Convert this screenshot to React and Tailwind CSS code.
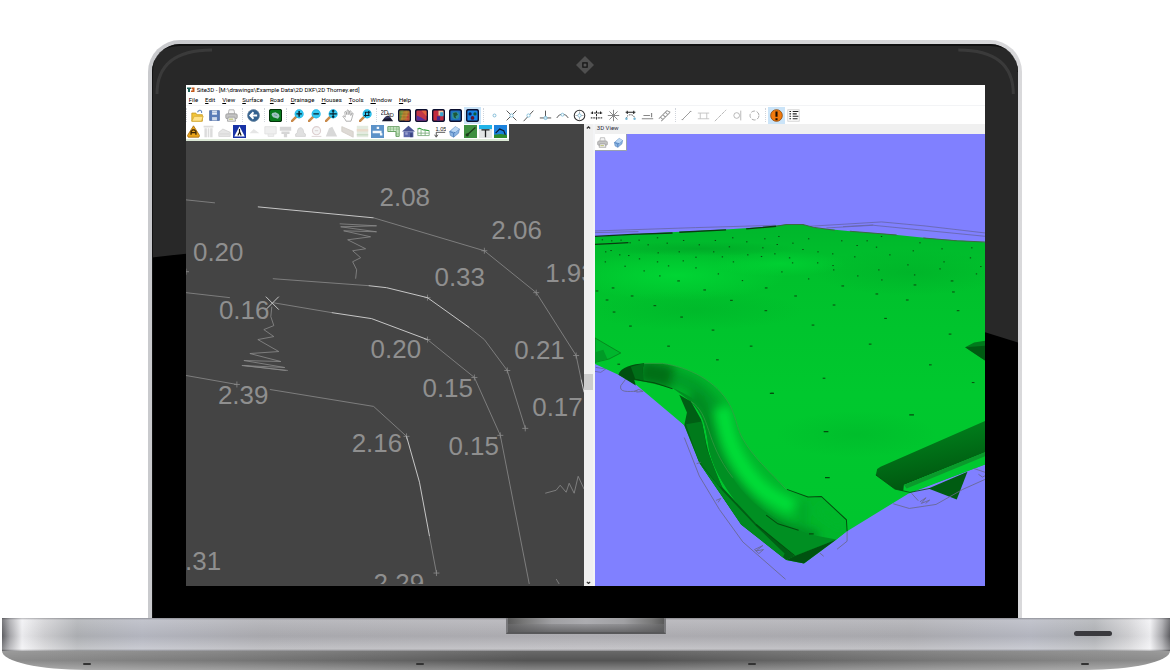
import React from "react";

const FONT = "font-[Roboto,'Noto_Sans',sans-serif]";

const MENUS = [
  "File",
  "Edit",
  "View",
  "Surface",
  "Road",
  "Drainage",
  "Houses",
  "Tools",
  "Window",
  "Help",
];

/* ---------- toolbar icons, all on a 16 x 16 grid ---------- */

const Lens = ({ children }) => (
  <>
    <path d="M1 15l5-5" stroke="#c98a4b" strokeWidth="3" strokeLinecap="round" />
    <circle cx="10" cy="6" r="5.6" fill="#19b4e6" />
    <circle cx="10" cy="6" r="4.6" fill="#35c8f0" />
    <g stroke="#06222e" strokeWidth="1.8" fill="none">
      {children}
    </g>
  </>
);

const Tile = ({ fill, children }) => (
  <>
    <rect x="0.8" y="0.8" width="14.4" height="14.4" rx="2.4" fill={fill} stroke="#0c1030" strokeWidth="1.8" />
    {children}
  </>
);

const Printer = () => (
  <>
    <path d="M4 6l1-5h6l1 5z" fill="#f4f4f4" stroke="#aaa" />
    <rect x="1" y="6" width="14" height="6" rx="1.5" fill="#c4c4c4" stroke="#999" />
    <path d="M4 10h8l1 5H3z" fill="#eee" stroke="#999" />
    <path d="M5 12.5h5" stroke="#a9b13c" />
  </>
);

const Cube = () => (
  <>
    <path d="M2 8l7-6 5 3-1 5-6 5-4-2z" fill="#8ab4e2" stroke="#5a86bd" strokeWidth="0.8" />
    <path d="M2 8l5 2 7-5M7 10v5" stroke="#4576b5" fill="none" />
    <path d="M9 2l5 3-5 4-5-2z" fill="#bcd8f4" />
  </>
);

const FILE_GROUP = [
  ["Open", <><path d="M1 5h5l1 2h7v8H1z" fill="#f3c63a" stroke="#c59a25" /><path d="M1 15l3-6h11l-2 6z" fill="#ffe38a" stroke="#d5ab39" /><path d="M8 4c1-3 4-3 5-1v2" stroke="#6c8fc0" strokeWidth="1.4" fill="none" /></>],
  ["Save", <><path d="M2 2h12v12H2z" fill="#5b7db8" stroke="#4a69a0" /><rect x="5" y="2" width="6" height="5" fill="#e8eef8" /><rect x="5" y="10" width="6" height="4" fill="#cfdaec" /><path d="M5 4h6" stroke="#8ea5cc" /></>],
  ["Print", <Printer />],
];

const BACK_GROUP = [
  ["Back", <><circle cx="8" cy="8" r="7.3" fill="#33618f" stroke="#6b87a3" /><path d="M12.5 8H5M8 4L4 8l4 4" stroke="#fff" strokeWidth="2.2" fill="none" /></>],
];

const SITE_GROUP = [
  ["Site", <><rect x="0.5" y="0.5" width="15" height="15" rx="2.5" fill="#087a1c" stroke="#02330a" strokeWidth="1.4" /><path d="M4 5l4-1 4 2 1 3-2 3-3-1-3-1-2-3z" fill="#9fc4c0" /><path d="M6 7l4 1" stroke="#5a8f86" /></>],
];

const ZOOM_GROUP = [
  ["Zoom in", <Lens><path d="M10 2.6v6.8M6.6 6h6.8" /></Lens>],
  ["Zoom out", <Lens><path d="M6.6 6h6.8" /></Lens>],
  ["Zoom extents", <Lens><path d="M10 1.5v9M5.5 6h9M8.5 3L10 1.6 11.5 3M8.5 9l1.5 1.4L11.5 9" strokeWidth="1.4" /></Lens>],
  ["Pan", <path d="M5 15c-1-3-3-4-4-6 1-1 2 0 3 1L3.500 3.500c1-1 1.800 0 2 1L6 7l.3-5.500c1-1 1.800 0 1.900.8L8.500 7l1-4.500c1-.8 1.700 0 1.600 1L10.800 8l1.500-3c1-.5 1.500.3 1.300 1.200L12 12l-1 3z" fill="#fff" stroke="#888" strokeWidth="0.8" />],
  ["Zoom window", <Lens><path d="M8 3.500v6M6 8h7M12 2.500v6M7 4h7" strokeWidth="1.300" /></Lens>],
];

const VIEW_GROUP = [
  ["2D to 3D", <><path d="M1 15l3-4 4-2 4 2 3 4z" fill="#17172e" /><path d="M4 12c1-4 6-5 8-1" fill="#3c3c68" /><text x="-1" y="7" className="font-['Liberation_Sans',sans-serif] text-[8px]" fill="#222">2D</text><text x="7" y="10" className="font-['Liberation_Sans',sans-serif] text-[7px]" fill="#222">3D</text></>],
  ["Contours", <Tile fill="#a8782c"><path d="M2 14V2h5L3 14z" fill="#5d8a3c" /><path d="M14 3v11H8z" fill="#c04a36" /><path d="M3 4h10M3 8h10M3 12h10M5 2v12M10 2v12" stroke="#d9a548" strokeWidth="0.4" /></Tile>],
  ["Slopes", <Tile fill="#c23848"><path d="M2 14V8l5 2 7 4z" fill="#5530a0" /><path d="M8 2h6v7z" fill="#e2663a" /></Tile>],
  ["Cut and fill", <Tile fill="#c22a3e"><path d="M8 2h6v6H8z" fill="#e9c9a0" /><path d="M10 4h4v5h-4z" fill="#3ca4cf" /><path d="M6 9h4v5H6z" fill="#45278c" /></Tile>],
  ["Globe", <Tile fill="#1e6fc0"><circle cx="8" cy="8" r="4.600" fill="#2d8f9a" /><path d="M5 5l4-1 2 3-3 2 1 3-3-2z" fill="#1d5638" /></Tile>],
  ["Points", <Tile fill="#1684e8"><circle cx="5" cy="6" r="2" fill="#0b1d50" /><circle cx="11" cy="6" r="2" fill="#0b5b3a" /><circle cx="8" cy="11" r="2.300" fill="#64112a" /></Tile>, "on"],
];

const SNAP_GROUP = [
  ["Free", <circle cx="8" cy="8" r="1.800" fill="none" stroke="#6db0d0" />],
  ["Intersection", <><path d="M2 2l12 12M14 2L2 14" stroke="#333" /><circle cx="8" cy="8" r="2" fill="#fff" stroke="#79b9d6" /></>],
  ["Nearest", <><path d="M2 15L14 2" stroke="#333" /><circle cx="8" cy="8" r="2" fill="#fff" stroke="#79b9d6" /></>],
  ["Perpendicular", <><path d="M8 2v9M1 11h14" stroke="#333" /><circle cx="8" cy="11" r="2" fill="#cde6f2" stroke="#79b9d6" /></>],
  ["Arc", <><path d="M1 11c3-6 11-6 14 0" stroke="#333" fill="none" /><circle cx="8" cy="7" r="1.800" fill="#fff" stroke="#79b9d6" /></>],
  ["Centre", <><circle cx="8" cy="8" r="6.500" fill="none" stroke="#333" strokeWidth="1.300" /><path d="M8 3v10M3 8h10" stroke="#888" strokeWidth="0.8" /><circle cx="8" cy="8" r="2" fill="#fff" stroke="#79b9d6" /></>],
  ["Midpoint", <><path d="M1 5h14M3 3v4M13 3v4M8 2v12" stroke="#222" strokeWidth="1.300" strokeDasharray="3 1" /><path d="M1 11h14" stroke="#444" strokeWidth="1.400" strokeDasharray="2 1" /></>],
  ["Node", <path d="M8 1v14M1 8h14M3 3l10 10M13 3L3 13" stroke="#888" strokeWidth="1.200" />],
  ["Tangent", <><path d="M2 4h12M4 2v4M12 2v4" stroke="#222" strokeWidth="1.300" /><path d="M3 12c0-4 3-5 5-5s5 1 5 5" stroke="#444" strokeDasharray="2 1" fill="none" /><circle cx="3" cy="12" r="1.500" fill="#79b9d6" /><circle cx="13" cy="12" r="1.500" fill="#79b9d6" /></>],
  ["Baseline", <path d="M1 12h14M3 8h8M13 5v5" stroke="#888" strokeWidth="1.500" />],
  ["Offset", <path d="M1 12L11 2M4 15L15 4M3 10l3 3M6 7l3 3M9 4l3 3M11 2l4 2" stroke="#999" strokeWidth="1.300" />],
];

const DRAW_GROUP = [
  ["Line", <path d="M3 13L13 3M2 13h2M12 3h2" stroke="#999" strokeWidth="1.200" fill="none" />],
  ["Dimension", <path d="M1 5h14M4 5v7M12 5v7M1 12h14" stroke="#bbb" fill="none" />],
  ["Extend", <path d="M1 15L15 1" stroke="#aaa" strokeDasharray="5 1" />],
  ["Tangent circle", <><circle cx="7" cy="8" r="3.500" fill="none" stroke="#aaa" /><path d="M12 2v12" stroke="#aaa" /></>],
  ["Circle", <circle cx="8" cy="8" r="5.500" fill="none" stroke="#999" strokeDasharray="5 2" />],
];

const INFO_GROUP = [
  ["Warnings", <><circle cx="8" cy="8" r="7.200" fill="#f27a0c" stroke="#8a4a10" /><path d="M8 3v6.500M8 11.500v2.200" stroke="#1c0d00" strokeWidth="2.600" /></>, "on"],
  ["Report", <><rect x="1" y="1" width="14" height="14" fill="#fff" stroke="#ccc" /><path d="M3 3h2M7 3h7M3 6h2M7 6h5M3 9h2M7 9h7M3 12h2M7 12h6" stroke="#222" strokeWidth="1.300" /></>],
];

const TOOL_GROUPS = [
  FILE_GROUP,
  BACK_GROUP,
  SITE_GROUP,
  ZOOM_GROUP,
  VIEW_GROUP,
  SNAP_GROUP,
  DRAW_GROUP,
  INFO_GROUP,
];

const PALETTE = [
  ["Road works", <><path d="M8 1L15.500 13l-1 2h-13l-1-2z" fill="#eaa41b" stroke="#a66c0d" /><path d="M5 12V8l2-2h2l2 2v4M5 9.500h6" stroke="#3b2506" strokeWidth="1.600" fill="none" /></>],
  ["Columns", <path d="M2 1h12v2H2zM3 4h3v11H3zM7 4h2v11H7zM10 4h3v11h-3z" fill="#dcdcdc" />],
  ["Embankment", <path d="M1 14V9l5-4 9 4v5zM2 11h12" fill="#e6e6e6" stroke="#d3d3d3" />],
  ["Crossing", <><rect width="16" height="16" fill="#1732a6" /><path d="M8 1.500L14.500 14h-13z" fill="#fff" /><path d="M8 5v4l-2 4M8 8l2 5" stroke="#111" strokeWidth="1.400" fill="none" /></>],
  ["Slope", <path d="M2 10l5-5 7 5z" fill="#e6e6e6" />],
  ["Board", <path d="M1 2h14v9H1zM5 11v3h7v-3" fill="#efefef" stroke="#e0e0e0" />],
  ["Manhole", <path d="M1 2h14v5H1zM3 8h10v3H3zM6 11h4v4H6z" fill="#d6d6d6" />],
  ["Chamber", <path d="M2 14h12v-3l-2-1c0-9-8-9-8 0l-2 1z" fill="#e0e0e0" stroke="#d2d2d2" />],
  ["Pipe", <><circle cx="8" cy="7" r="5" fill="#f5f5f5" stroke="#ddd0d0" strokeWidth="1.400" /><path d="M2 14h12M6 7h4" stroke="#d5cccc" /></>],
  ["Catchment", <path d="M1 14l4-10 4-2 6 12z" fill="#d8d8d8" />],
  ["Kerb", <path d="M1 2l14 6v7L1 8z" fill="#dedad5" stroke="#d2cdc6" />],
  ["Layers", <><rect x="1" y="1" width="14" height="14" fill="#e4ebe0" /><path d="M1 5h14v3H1z" fill="#eadccc" /><path d="M1 11h14v2H1z" fill="#c9dcc5" /></>],
  ["Tap", <><rect width="16" height="16" fill="#5c92c8" /><path d="M7 2h3v3h-3zM2 7h11v3H2zM11 10h3v3h-3z" fill="#f4f8fc" /></>],
  ["Hatch", <><path d="M1 2h14v12h-4V8H1z" fill="#d2ebce" stroke="#4f8f4a" /><path d="M1 5h14M4 2v6M8 2v6M12 2v12M11 11h4" stroke="#67a561" strokeWidth="0.6" /></>],
  ["House", <><path d="M0 8l8-7 8 7z" fill="#4a5494" /><rect x="2" y="8" width="12" height="7" fill="#5e68aa" /><rect x="4" y="9" width="3" height="3" fill="#98a0d0" /><rect x="10" y="10" width="3" height="5" fill="#3b447e" /></>],
  ["Long section", <><path d="M1 5c3-3 5 2 8 1l6 1" stroke="#35a23f" strokeWidth="1.300" fill="none" /><path d="M1 4v9h14V7M1 10h14M5 6v7M10 6v7" stroke="#76a978" fill="none" /></>],
  ["Level", <><text x="3" y="7" className="font-['Liberation_Sans',sans-serif] text-[7px]" fill="#222">1.05</text><path d="M15 9H4v5M2 12l2 3 2-3" stroke="#333" fill="none" /></>],
  ["Solid", <Cube />],
  ["Excavate", <><rect width="16" height="16" fill="#3f9040" /><path d="M3 13L14 3" stroke="#1d3d1b" strokeWidth="1.600" /><circle cx="4" cy="12" r="2" fill="#1d3d1b" /></>],
  ["Sign", <><rect width="16" height="16" fill="#e3e6e6" /><rect width="16" height="5" fill="#21b4e8" /><path d="M3 6h10M8 6v9" stroke="#1d2020" strokeWidth="1.600" /></>],
  ["Terrain", <><rect width="16" height="16" fill="#1b82dd" /><path d="M0 16v-4l8-1 8 1v4z" fill="#2e8b2f" /><path d="M2 10l5-5 5 2 2 5" stroke="#0b1c36" strokeWidth="1.500" fill="none" /></>],
];

function Icon({ children, className = "size-[13px]" }) {
  return (
    <svg viewBox="0 0 16 16" className={className} fill="none" aria-hidden="true">
      {children}
    </svg>
  );
}

/* ---------- plan drawing ---------- */

const LEVELS = [
  [380, 206, "2.08"],
  [492, 239, "2.06"],
  [546, 282, "1.93"],
  [193, 261, "0.20"],
  [435, 286, "0.33"],
  [219, 319, "0.16"],
  [371, 358, "0.20"],
  [515, 359, "0.21"],
  [218, 405, "2.39"],
  [423, 398, "0.15"],
  [533, 417, "0.17"],
  [352, 453, "2.16"],
  [449, 456, "0.15"],
  [185, 571, ".31"],
  [374, 593, "2.29"],
];

const NODES = [
  [485, 251], [537, 293], [577, 356], [428, 298], [508, 371], [526, 429],
  [428, 340], [475, 378], [501, 436], [237, 385], [407, 437], [437, 574], [186, 272],
];

function PlanDrawing() {
  return (
    <svg viewBox="186 141 399 444" className="block w-full" role="img" aria-label="Plan view">
      <g fill="none" stroke="#8b8b8b" strokeWidth="0.8">
        <path d="M186 200l29 3M374 218l111 33 52 42 40 63 5 24" />
        <path d="M273 279l96 7M470 328l15 12 23 31 18 58" />
        <path d="M186 293l44 5M273 303l59 10M428 340l47 38 26 58 29 149" />
        <path d="M186 376l51 9M270 390l104 17 33 30M430 537l7 37" />
        <path d="M340 224l37 2-36 1 36 5-33-1 27 6-23 3 18 9-13 2 8 7-8 4 4 8-1 9" />
        <path d="M272 307l-1 10 3 9-10 4 10 7-16 3 21 12-29 2 31 8-37-1 41 7-43-2 46 5M244 366l42 5" />
        <path d="M546 494l11-3 4-5 6 7 3-9 5 10 4-17 6 13M557 580l3 5" />
        {NODES.map(([x, y]) => (
          <path key={`${x}-${y}`} d={`M${x - 3} ${y}h6M${x} ${y - 3}v6`} />
        ))}
      </g>
      <g fill="none" stroke="#d6d6d6" strokeWidth="0.9">
        <path d="M258 207l116 11M369 286l18 2 41 10 42 30M332 313l40 6 56 21M582 380l3 13" />
        <path d="M407 437l13 46 10 54M266 297l13 13M279 297l-13 13" />
      </g>
      <g fill="#8f8f8f" className="font-['Liberation_Sans',Arial,sans-serif] text-[26px]">
        {LEVELS.map(([x, y, label]) => (
          <text key={`${x}-${y}`} x={x} y={y}>
            {label}
          </text>
        ))}
      </g>
    </svg>
  );
}

/* ---------- 3D terrain, three units per pixel ---------- */

const SURVEY_POINTS = [
  [50, 154], [92, 163], [151, 175], [49, 184], [119, 165], [108, 197], [165, 211], [205, 184], [238, 196], [212, 226],
  [268, 241], [320, 202], [387, 220], [432, 184], [282, 181], [320, 170], [399, 169], [459, 240], [346, 268], [530, 262],
  [577, 214], [609, 187], [600, 172], [657, 235], [684, 187], [732, 208], [730, 195], [759, 256], [618, 286], [733, 313],
  [804, 226], [867, 208], [795, 169], [876, 238], [861, 280], [954, 193], [974, 223], [975, 253], [952, 298], [1050, 205],
  [1062, 184], [1086, 241], [1090, 274], [1104, 330], [1159, 220], [1172, 198], [1141, 172], [1056, 145], [1145, 142], [990, 127],
  [970, 151], [900, 163], [887, 353], [832, 121], [875, 108], [860, 140], [802, 135], [756, 121], [729, 160], [685, 154],
  [640, 147], [610, 128], [657, 115], [568, 108], [563, 132], [526, 115], [520, 142], [472, 124], [475, 163], [430, 112],
  [420, 139], [373, 154], [378, 120], [330, 133], [283, 120], [270, 154], [234, 128], [205, 112], [177, 133], [150, 119],
  [123, 127], [96, 119], [68, 121], [40, 118], [66, 150], [207, 157], [72, 262], [129, 286], [54, 298], [24, 271],
  [197, 315], [75, 334], [124, 376], [277, 349], [371, 388], [426, 299], [529, 330], [670, 373], [238, 436], [485, 436],
  [384, 477], [703, 532], [841, 430], [1080, 400], [1021, 492], [1149, 545], [548, 577], [89, 490], [516, 168], [556, 160],
];

function Terrain() {
  return (
    <svg viewBox="18 0 1167 1353" className="block w-full" role="img" aria-label="3D view">
      <defs>
        <linearGradient id="ground" x1="0" y1="0" x2="0" y2="1">
          <stop offset="0" stopColor="#00b62c" />
          <stop offset="0.12" stopColor="#00c02c" />
          <stop offset="0.5" stopColor="#00c82e" />
          <stop offset="1" stopColor="#00c42e" />
        </linearGradient>
        <radialGradient id="crest">
          <stop offset="0" stopColor="#00e038" />
          <stop offset="1" stopColor="#00e038" stopOpacity="0" />
        </radialGradient>
        <radialGradient id="dip">
          <stop offset="0" stopColor="#00a626" stopOpacity="0.7" />
          <stop offset="1" stopColor="#00a626" stopOpacity="0" />
        </radialGradient>
        <linearGradient id="swale" x1="0" y1="0" x2="0.3" y2="1">
          <stop offset="0" stopColor="#008c20" />
          <stop offset="1" stopColor="#00560f" />
        </linearGradient>
        <clipPath id="bankShape">
          <path d="M165-52h55C300-40 380 0 420 70C440 110 440 130 455 165C490 230 540 270 590 325L658 348L695 346L770 416V450L740 475L615 525L500 430C440 370 380 290 360 210C350 150 350 110 305 62L250 22L135-4z" />
        </clipPath>
        <filter id="soften" x="-20%" y="-20%" width="140%" height="140%">
          <feGaussianBlur stdDeviation="14" />
        </filter>
      </defs>
      <rect x="18" width="1167" height="1353" fill="#8080ff" />

      {/* far outline */}
      <g transform="translate(0 198)">
        <g fill="none" stroke="#6666a8" strokeWidth="2.5">
          <path d="M18 92l300-10 240-7M660 78l215-13 130 12 180 21M710 83l140-8 335 33M18 97l130-3M760 79l90-5" />
          <path d="M20 500l30 5-15 10-17-3" />
        </g>
        <path d="M18 109L200 98 420 87 540 79 590 73H640L680 83 790 94 900 102 1040 116 1185 126V790L955 878 772 990 740 1015 643 1087 590 1076 455 970 330 785 285 673 140 551 88 522 18 490z" fill="url(#ground)" />
        <ellipse cx="260" cy="225" rx="330" ry="75" fill="url(#crest)" opacity="0.65" />
        <ellipse cx="570" cy="190" rx="200" ry="38" fill="url(#crest)" opacity="0.5" />
        <ellipse cx="330" cy="145" rx="300" ry="22" fill="url(#dip)" />
        <ellipse cx="960" cy="215" rx="290" ry="70" fill="url(#dip)" opacity="0.6" />
        <ellipse cx="320" cy="330" rx="320" ry="60" fill="url(#dip)" opacity="0.45" />
        <ellipse cx="800" cy="700" rx="240" ry="70" fill="url(#dip)" opacity="0.4" />
        <g fill="none" stroke="#0a3a10" strokeWidth="3">
          <path d="M18 108L130 102 250 98M270 96l140-7M470 86l90-8M18 132l60-3 40-2" strokeWidth="4" />
          <path d="M560 78l30-5h50l35 9 60 8M780 93l140 11M1000 113l100 8 85 4" stroke="#3b6b40" />
        </g>
        <g fill="#0a4a0e">
          {SURVEY_POINTS.map(([x, y]) => (
            <rect key={`${x}-${y}`} x={x - (y > 240 ? 4 : 2)} y={y - 1} width={y > 240 ? 8 : 4} height="3" />
          ))}
        </g>
        {/* hollows at both edges */}
        <path d="M18 412l77 45-35 18-42 10z" fill="#00b62d" stroke="#087018" strokeWidth="2" />
        <path d="M18 455l25-8 12 28-37 10z" fill="#009a26" />
        <path d="M1125 440l27-14 33-6v60l-22-15z" fill="#007a1c" />
        <path d="M1125 440l60-5v45l-22-15z" fill="#005a12" />
      </g>

      {/* front ditch */}
      <g transform="translate(0 738)">
        <path d="M135-4l115 26 43 38-8 73L140 0z" fill="#00c62e" />
        <g clipPath="url(#bankShape)">
          <rect x="80" y="-70" width="700" height="620" fill="#00b62b" />
          <g filter="url(#soften)" fill="none">
            <path d="M150-30L250-10" stroke="#007018" strokeWidth="70" />
            <path d="M250-10C320 10 350 40 380 90" stroke="#009c26" strokeWidth="50" />
            <path d="M400 80C410 150 420 200 470 270S560 350 610 380" stroke="#00de38" strokeWidth="46" />
            <path d="M300 50C370 110 330 190 420 310S560 450 680 480" stroke="#008a20" strokeWidth="60" />
            <path d="M640 360L640 450" stroke="#00a026" strokeWidth="16" />
            <path d="M690 380L760 430" stroke="#00b82c" strokeWidth="30" />
          </g>
        </g>
        <path d="M250 22l55 40C350 110 350 150 360 210C380 290 440 370 500 430L615 525L740 475L660 460C570 430 480 370 430 290C390 220 365 190 362 130C360 90 320 50 250 22z" fill="#008f22" />
        <path d="M88-18C95-40 130-50 165-52L160-34L162 0L135-4L140 14z" fill="#00500f" />
        <path d="M125-42l40-10-5 18 4 34-26-6z" fill="#006e18" />
        <path d="M270 42L305 62L335 115C345 150 348 180 355 205C370 260 390 300 400 320L500 428L615 525L590 536L455 430L330 245L285 133L293 95z" fill="#005f14" />
        <path d="M290 130l48-8 14 80 46 117-10-5-60-75z" fill="#007a1b" />
        <path d="M330 245l70 85 100 105 85 82-5 12-125-99z" fill="#008820" />
        <path d="M590 536l25-12 125-49-97 72z" fill="#005210" />
        <g fill="none" stroke="#034d0e" strokeWidth="3">
          <path d="M135-4l60 10 55 18M592 325l63 23 40-2 75 70 2 34M530 402l35 26 62 19M500 430l115 93" />
          <path d="M658 458h14M541 38h12M702 152h14M706 290h14M958 102h14" strokeWidth="4" />
        </g>
        <path d="M165-52h55C300-40 380 0 420 70C440 110 440 130 455 165C490 230 540 270 590 325M305 62C365 100 345 180 430 290" fill="none" stroke="#3d9a48" strokeWidth="2" />

        {/* side swale */}
        <path d="M872 257l313-137v96L942 312l-2 18-25-6-57-42 4-18z" fill="url(#swale)" />
        <path d="M942 312l243-98v36L960 334l-18-8z" fill="#00c830" />
        <path d="M942 312l243-98v12L950 322z" fill="#0b9a2c" />
        <path d="M1015 322l117-50-32 83z" fill="#005c12" />
        <path d="M858 282l57 42 45 10 60-12" fill="none" stroke="#064b0e" strokeWidth="2.5" />

        <g fill="none" stroke="#68688c" strokeWidth="2.5">
          <path d="M772 450v30l-30 24M690 515l12 10M285 170l45 115 60 100 70 97 128 112" />
          <path d="M95 15c-5 20 20 18 50 16M95 15l15-20M135 32l14-6 13 6-20 2" />
          <path d="M910 368l48 14 80-12 80-45 67-30M965 337l20 22M1150 262l35 12M1165 280l12 8 8-4" />
          <path d="M495 505l25-12-20 16 22-4-14 12zM380 358l14-6-8 12M322 248l12-4M990 362l18-12-14 17 25-10-12 10" />
        </g>
      </g>
    </svg>
  );
}

/* ---------- application window ---------- */

function Toolbar() {
  return (
    <div className="flex h-[19px] items-center border-t border-gray-100 bg-white">
      {TOOL_GROUPS.map((group, i) => (
        <div key={i} className="flex items-center">
          <span className="mr-px h-3.5 w-px border-l border-dotted border-gray-300" />
          <div className="flex pr-0.5 pl-px">
            {group.map(([name, art, on]) => (
              <button
                key={name}
                type="button"
                aria-label={name}
                className={`flex h-[17px] w-[17px] items-center justify-center ${on ? "bg-[#cbe4f8]" : ""}`}
              >
                <Icon>{art}</Icon>
              </button>
            ))}
          </div>
        </div>
      ))}
    </div>
  );
}

function PlanPane() {
  return (
    <section className="flex flex-[408] bg-[#444444]">
      <div className="min-w-0 flex-1">
        <div className="flex h-[17px] w-[323px] items-center border-b-2 border-[#dbe8d5] bg-white">
          {PALETTE.map(([name, art]) => (
            <button key={name} type="button" aria-label={name} className="flex flex-1 justify-center">
              <Icon>{art}</Icon>
            </button>
          ))}
        </div>
        <PlanDrawing />
      </div>
      <div className="flex w-[9px] flex-col items-center bg-[#f0f0f0]">
        <button type="button" aria-label="Scroll up" className="flex h-2 w-full items-center justify-center">
          <svg viewBox="0 0 6 4" className="w-[5px]" fill="none" stroke="#333" strokeWidth="1.5">
            <path d="M1 3l2-2 2 2" />
          </svg>
        </button>
        <div className="flex-[241]" />
        <div className="h-4 w-full bg-[#cdcdcd]" />
        <div className="flex-[188]" />
        <button type="button" aria-label="Scroll down" className="flex h-2 w-full items-center justify-center">
          <svg viewBox="0 0 6 4" className="w-[5px]" fill="none" stroke="#333" strokeWidth="1.5">
            <path d="M1 1l2 2 2-2" />
          </svg>
        </button>
      </div>
    </section>
  );
}

function ViewPane() {
  return (
    <section className="flex-[391] border-l-2 border-gray-100">
      <h2 className="h-2.5 bg-[#f0f0f0] pl-0.5 text-[6px] leading-[8px] text-gray-800">3D View</h2>
      <div className="relative">
        <Terrain />
        <div className="absolute top-0 left-0 flex h-[17px] w-8 items-center justify-around border-r border-b border-gray-400 bg-white">
          <button type="button" aria-label="Print view">
            <Icon className="size-[11px]"><Printer /></Icon>
          </button>
          <button type="button" aria-label="Solid view">
            <Icon className="size-[11px]"><Cube /></Icon>
          </button>
        </div>
      </div>
    </section>
  );
}

function AppWindow() {
  return (
    <div className={`relative overflow-hidden bg-white text-black ${FONT}`}>
      <div className="flex h-2.5 items-center gap-0.5 pl-px">
        <svg viewBox="0 0 16 12" className="w-2">
          <path d="M0 1h8v3H6v6H2V4H0z" fill="#1f5f58" />
          <path d="M9 1h6v9H8V7h3V4H9z" fill="#c65a1c" />
        </svg>
        <h1 className="text-[6px] leading-[10px] whitespace-nowrap">
          Site3D - [M:\drawings\Example Data\2D DXF\2D Thorney.erd]
        </h1>
      </div>
      <nav className="flex h-2.5 items-center gap-[7px] pl-[3px]">
        {MENUS.map((name) => (
          <button key={name} type="button" className="text-[6px] leading-[10px]">
            <span className="underline">{name[0]}</span>
            {name.slice(1)}
          </button>
        ))}
      </nav>
      <Toolbar />
      <div className="flex items-stretch">
        <PlanPane />
        <ViewPane />
      </div>
    </div>
  );
}

/* ---------- laptop ---------- */

function Lid() {
  return (
    <div className="mr-[12.8%] ml-[12.6%] rounded-t-[32px] bg-gradient-to-r from-[#c9cacd] via-[#d0d1d3] to-[#d9d9db] px-1 pt-1">
      <div className="relative overflow-hidden rounded-t-[28px] bg-[#282828] pr-[33px] pb-8 pl-[34px]">
        {/* glare on the glass */}
        <svg viewBox="0 0 866 573" preserveAspectRatio="none" className="absolute inset-0 h-full w-full">
          <path d="M0 213Q433 160 866 298V573H0z" fill="#000" />
          <path d="M5 50Q5 6 60 6M806 6Q861 6 861 50" fill="none" stroke="#3a3a3a" strokeWidth="3" />
          <path d="M0 573V28Q0 1 28 1H838Q866 1 866 28" fill="none" stroke="#111" strokeWidth="2" />
        </svg>
        <div className="relative flex h-[41px] items-center justify-center">
          <svg viewBox="0 0 18 18" className="size-[18px]">
            <path d="M9 0l9 9-9 9-9-9z" fill="#4f4f4f" />
            <rect x="6" y="6" width="6" height="6" rx="1" fill="#222" />
            <circle cx="9" cy="9" r="1.500" fill="#555" />
          </svg>
        </div>
        <AppWindow />
      </div>
    </div>
  );
}

function Base() {
  return (
    <div className="mx-0.5">
      <div className="relative flex h-[33px] items-start justify-center bg-[linear-gradient(90deg,#606064_0,#a9a9ad_8px,#f1f1f4_20px,#d2d2d5_42px,#b0b2b6_75px,#b8bac4_140px,#adadb2_260px,#b2b1b6_50%,#adadb2_calc(100%_-_260px),#b8bac4_calc(100%_-_140px),#b0b2b6_calc(100%_-_75px),#d2d2d5_calc(100%_-_42px),#f1f1f4_calc(100%_-_20px),#a9a9ad_calc(100%_-_8px),#606064_100%)]">
        <div className="absolute inset-0 bg-[linear-gradient(180deg,rgba(70,70,75,.35)_0,rgba(255,255,255,.15)_2px,rgba(0,0,0,.03)_55%,rgba(255,255,255,.25)_94%,rgba(80,80,80,.4)_100%)]" />
        <div className="relative h-4 w-40 border-x-2 border-b-2 border-x-[#78787b] border-b-[#58585a] bg-[linear-gradient(90deg,#5a5a5a_0,#777_16px,#a0a0a3_44px,#acacb0_50%,#a0a0a3_116px,#777_144px,#5a5a5a_100%)]">
          <div className="absolute inset-x-0 bottom-0 h-2 bg-linear-to-b from-[#77777a]/40 to-[#5c5c5e]/80" />
        </div>
        <div className="absolute top-[13px] right-[58px] h-[5px] w-[38px] rounded-full bg-[#3a3a3e]" />
      </div>
      <div className="flex h-[19px] items-end justify-between rounded-b-[84px_19px] bg-[linear-gradient(180deg,rgba(255,255,255,.12)_0,rgba(0,0,0,0)_50%,rgba(255,255,255,.3)_100%),linear-gradient(90deg,#8d8d8d_0,#777_20%,#545454_45%,#545454_55%,#777_80%,#8d8d8d_100%)] px-[81px] pb-[5px]">
        <span className="h-0.5 w-2 rounded-full bg-[#333]" />
        <span className="h-0.5 w-2 rounded-full bg-[#333]" />
        <span className="h-0.5 w-2 rounded-full bg-[#333]" />
        <span className="h-0.5 w-2 rounded-full bg-[#333]" />
      </div>
    </div>
  );
}

export default function App() {
  return (
    <main className="bg-white pt-10">
      <Lid />
      <Base />
    </main>
  );
}
